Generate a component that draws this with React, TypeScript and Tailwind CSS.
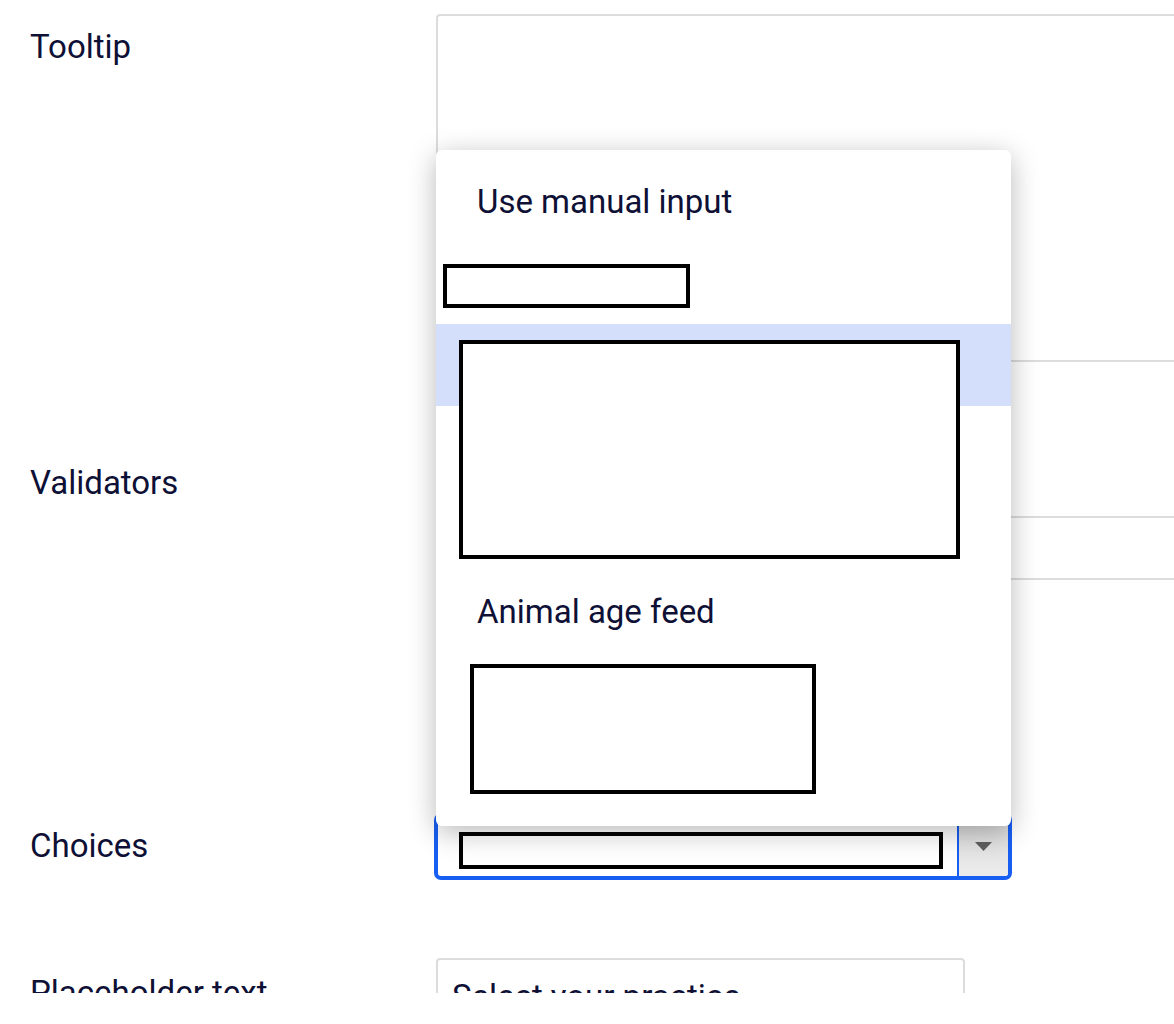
const Redacted = ({ className }: { className: string }) => (
  <div className={`absolute border-[4px] border-black bg-white ${className}`} />
);

const MenuRow = ({ label, active }: { label?: string; active?: boolean }) => (
  <div className={`flex h-[82px] items-center pl-[41px] ${active ? "bg-[#d4dffb]" : ""}`}>
    {label && <span className="text-[33px] leading-none">{label}</span>}
  </div>
);

export default function App() {
  return (
    <div
      className="relative h-[993px] overflow-hidden bg-white text-[#0e1035]"
      style={{ fontFamily: "Roboto, 'Noto Sans', sans-serif" }}
    >
      {/* Tooltip */}
      <div className="flex pt-[14px]">
        <div className="w-[436px] shrink-0 pl-[30px] pt-[16px] text-[33px] leading-[34px]">Tooltip</div>
        <div className="h-[348px] flex-1 rounded-tl-[4px] border-2 border-r-0 border-[#dcdcdc]" />
      </div>

      {/* Validators */}
      <div className="flex h-[451px]">
        <div className="w-[436px] shrink-0 pl-[30px] pt-[104px] text-[33px] leading-[34px]">Validators</div>
        <div className="flex-1 pt-[154px]">
          <div className="h-[64px] border-y-2 border-[#dcdcdc]" />
        </div>
      </div>

      {/* Choices */}
      <div className="flex">
        <div className="w-[434px] shrink-0 pl-[30px] pt-[16px] text-[33px] leading-[34px]">Choices</div>
        <div className="flex h-[67px] w-[578px] overflow-hidden rounded-[7px] border-[4px] border-[#175ef2]">
          <div className="relative flex-1">
            <Redacted className="left-[21px] top-[15px] h-[37px] w-[484px]" />
          </div>
          <div className="flex w-[51px] items-center justify-center border-l-2 border-[#175ef2] bg-gradient-to-b from-[#d9d9d9] to-[#ececec]">
            <svg width="17" height="9" viewBox="0 0 17 9">
              <path d="M0 0h17L8.5 9z" fill="#5f5f5f" />
            </svg>
          </div>
        </div>
      </div>

      {/* Placeholder text */}
      <div className="mt-[78px] flex">
        <div className="w-[436px] shrink-0 pl-[30px] pt-[18px] text-[33px] leading-[34px]">Placeholder text</div>
        <div className="h-[70px] w-[529px] rounded-[4px] border-2 border-[#dcdcdc] pl-[14px] pt-[20px] text-[33px] leading-[34px]">
          Select your practice
        </div>
      </div>

      {/* Dropdown menu */}
      <div className="absolute left-[436px] top-[150px] h-[676px] w-[575px] rounded-[6px] bg-white py-[10px] shadow-[0_6px_28px_rgba(0,0,0,0.28)]">
        <MenuRow label="Use manual input" />
        <MenuRow />
        <MenuRow active />
        <MenuRow />
        <MenuRow />
        <MenuRow label="Animal age feed" />
        <MenuRow />
        <MenuRow />
        <Redacted className="left-[7px] top-[114px] h-[44px] w-[247px]" />
        <Redacted className="left-[23px] top-[190px] h-[219px] w-[501px]" />
        <Redacted className="left-[34px] top-[514px] h-[130px] w-[346px]" />
      </div>
    </div>
  );
}
